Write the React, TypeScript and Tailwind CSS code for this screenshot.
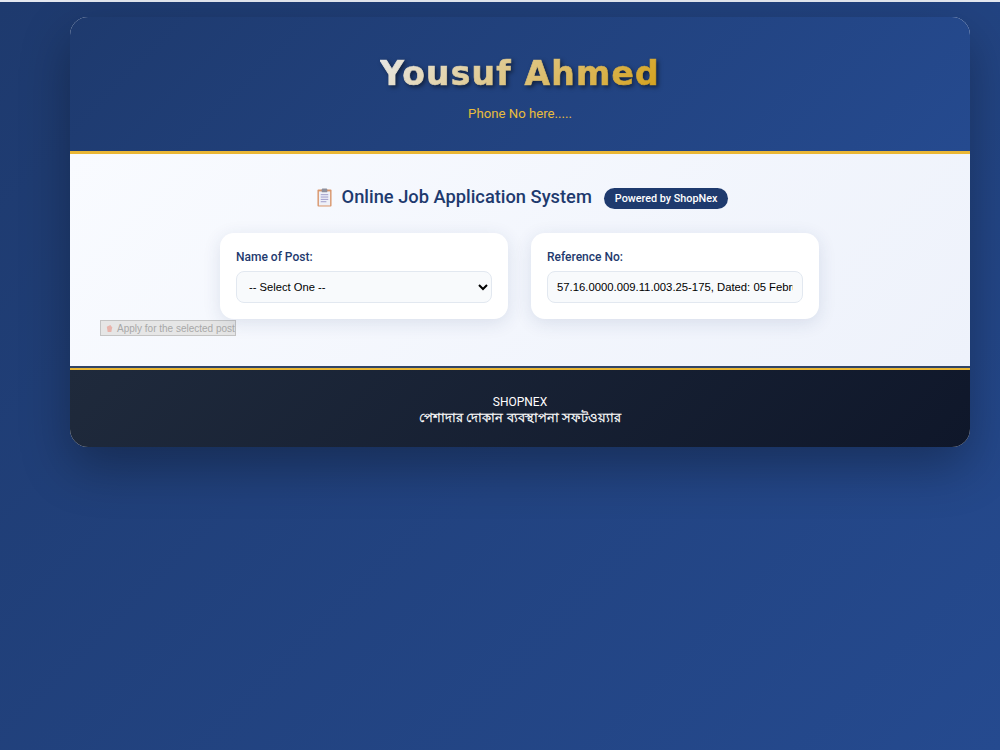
import React from "react";

// clipboard emoji, drawn because no colour emoji font can be relied on
function ClipboardIcon({ className }: { className?: string }) {
  return (
    <svg viewBox="0 0 16 20" className={className}>
      <rect x="0.5" y="1.5" width="15" height="18" rx="1" fill="#d9956a" />
      <rect x="2" y="3.5" width="12" height="15" fill="#eef0f8" />
      <rect x="5" y="0.5" width="6" height="4" rx="1" fill="#8d8f9c" />
      <path d="M4 7h8M4 9.5h8M4 12h8M4 14.5h6" stroke="#9a97c8" strokeWidth="1" />
    </svg>
  );
}

export default function App() {
  return (
    <div className="min-h-[750px] border-t-2 border-t-[#e4e8f0] bg-[linear-gradient(135deg,#1e3a6e,#254a8f)] pt-[15px] font-['Roboto','Noto_Sans',sans-serif]">
      <div className="relative ml-[70px] w-[900px] overflow-hidden rounded-[18px] bg-white shadow-[0_20px_50px_rgba(0,0,0,0.3)]">
        {/* header */}
        <div className="h-[137px] border-b-[3px] border-b-[#eab735] bg-[linear-gradient(135deg,#1e3a6e,#254a8f)] pt-[35px] text-center">
          <h1 className="inline-block bg-[linear-gradient(135deg,#e8e8e8,#d4a017)] bg-clip-text font-['DejaVu_Sans',sans-serif] text-[33px] leading-[44px] font-bold tracking-[1.2px] text-transparent drop-shadow-[2px_2px_2px_rgba(0,0,0,0.5)] [-webkit-text-stroke:0.7px_transparent]">
            Yousuf Ahmed
          </h1>
          <p className="mt-[8px] text-[13.2px] leading-[20px] text-[#e8bd3c]">Phone No here.....</p>
        </div>

        {/* body */}
        <div className="h-[212px] bg-[linear-gradient(135deg,#f9fbff,#eef2fb)] px-[30px] pt-[29px]">
          <div className="flex h-[28px] items-center justify-center">
            <ClipboardIcon className="ml-[5px] h-[19px] w-[15px]" />
            <h2 className="ml-[10px] text-[18.3px] font-medium text-[#1e3a6e]">Online Job Application System</h2>
            <span className="mt-[2px] ml-[12px] rounded-full bg-[#1e3a6e] px-[11px] py-[2px] text-[10.8px] leading-[17px] font-medium text-white">
              Powered by ShopNex
            </span>
          </div>

          <div className="mt-[22px] ml-[120px] grid w-[599px] grid-cols-2 gap-[23px]">
            <div className="h-[86px] rounded-[14px] bg-white px-[16px] pt-[15px] shadow-[0_4px_18px_rgba(30,58,110,0.12)]">
              <label className="block text-[12px] leading-[18px] font-medium text-[#1e3a6e]">Name of Post:</label>
              <select className="mt-[5px] h-[32px] w-full rounded-[8px] border border-[#e2e8f0] bg-[#f8fafc] px-[8px] font-['Liberation_Sans',sans-serif] text-[11.2px] text-black">
                <option>-- Select One --</option>
              </select>
            </div>
            <div className="h-[86px] rounded-[14px] bg-white px-[16px] pt-[15px] shadow-[0_4px_18px_rgba(30,58,110,0.12)]">
              <label className="block text-[12px] leading-[18px] font-medium text-[#1e3a6e]">Reference No:</label>
              <input
                readOnly
                value="57.16.0000.009.11.003.25-175, Dated: 05 February 2025"
                className="mt-[5px] h-[32px] w-full rounded-[8px] border border-[#e2e8f0] bg-[#f8fafc] px-[9px] font-['Liberation_Sans',sans-serif] text-[11.3px] text-black"
              />
            </div>
          </div>

          <button
            disabled
            className="mt-px flex h-[16px] w-[136px] items-center overflow-hidden border border-[#c4c4c4] bg-[#e6e6e6] pl-[4px] font-['Liberation_Sans',sans-serif] text-[10px] whitespace-nowrap text-[#a8a8a8]"
          >
            <svg viewBox="0 0 10 10" className="mr-[3px] h-[9px] w-[9px] shrink-0">
              <path d="M2 3l4-2 2 3-1 5H3z" fill="#e8b4ac" />
            </svg>
            Apply for the selected post
          </button>
        </div>

        {/* footer */}
        <div className="h-[81px] border-t-2 border-t-[#2f4468] bg-[linear-gradient(135deg,#1f2a3c,#0f172a)] text-center text-white">
          <div className="border-t-2 border-t-[#eab735] pt-[24px] text-[12px] leading-[16px]">
            <p>SHOPNEX</p>
            <p className="text-[13px] font-medium [-webkit-text-stroke:0.3px_white]">পেশাদার দোকান ব্যবস্থাপনা সফটওয়্যার</p>
          </div>
        </div>
      </div>
    </div>
  );
}
